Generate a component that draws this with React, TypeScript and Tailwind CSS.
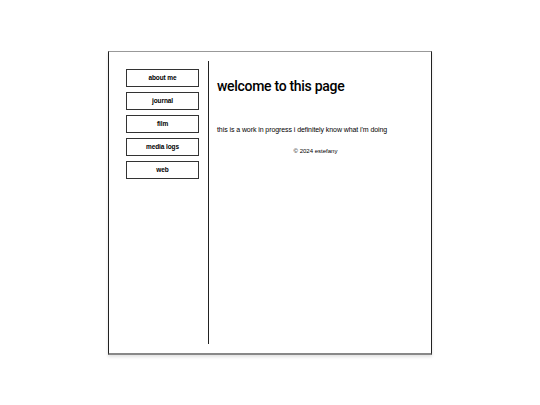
export default function App() {
  const links = ["about me", "journal", "film", "media logs", "web"];
  return (
    <div className="flex h-[405px] w-full items-center justify-center bg-white font-['Liberation_Sans',Arial,sans-serif] text-black">
      <div className="flex h-[304px] w-[324px] border-x border-t border-b-2 border-x-[#222] border-t-[#999] border-b-[#888] py-[9px] pl-[17px] shadow-[0_2px_3px_rgba(0,0,0,0.12)]">
        <nav className="flex w-[83px] flex-col gap-[5px] border-r border-[#222] pt-[8px] pr-[9px]">
          {links.map((l) => (
            <a
              key={l}
              className="flex h-[18px] items-center justify-center border border-[#333] text-[6.5px] font-bold tracking-[-0.1px]"
            >
              {l}
            </a>
          ))}
        </nav>
        <main className="flex flex-1 flex-col pl-[8px]">
          <h1 className="mt-[16px] font-['Roboto',sans-serif] text-[14px] font-medium leading-[18px] tracking-[-0.3px]">
            welcome to this page
          </h1>
          <p className="mt-[31px] text-[7px] leading-[8px] tracking-[-0.08px]">
            this is a work in progress i definitely know what i'm doing
          </p>
          <p className="mt-[13px] pr-[17px] text-center text-[6px] leading-[8px]">© 2024 estefany</p>
        </main>
      </div>
    </div>
  );
}
